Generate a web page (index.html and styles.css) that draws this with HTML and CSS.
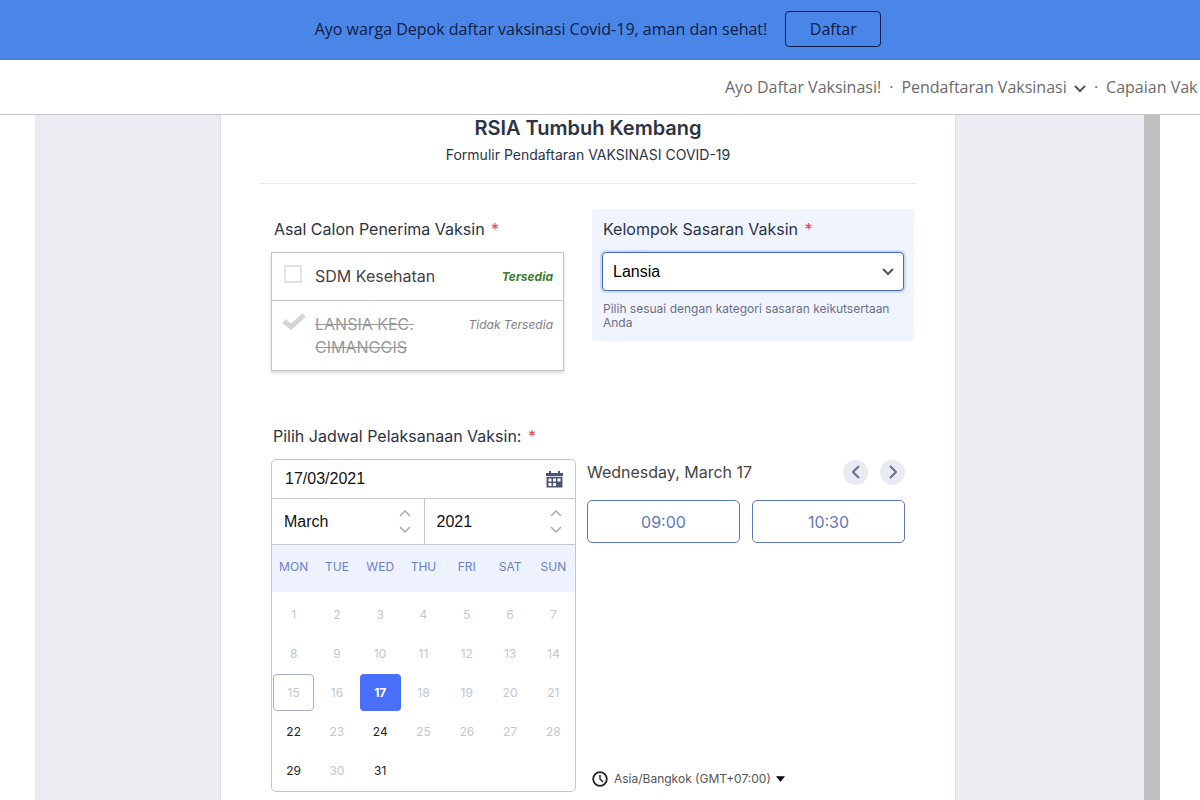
FILE: index.html
```html
<!DOCTYPE html>
<html lang="id">
<head>
<meta charset="utf-8">
<meta name="viewport" content="width=device-width, initial-scale=1">
<title>RSIA Tumbuh Kembang</title>
<link rel="stylesheet" href="styles.css">
</head>
<body>
<div class="banner">
  <span>Ayo warga Depok daftar vaksinasi Covid-19, aman dan sehat!</span>
  <a class="banner-button" href="#form">Daftar</a>
</div>
<header class="site-header">
  <nav class="nav">
    <a href="#">Ayo Daftar Vaksinasi!</a>
    <span class="dot">·</span>
    <a href="#">Pendaftaran Vaksinasi
      <svg class="nav-chevron" width="12" height="8" viewBox="0 0 12 8" aria-hidden="true"><path d="M1 1l5 5 5-5" fill="none" stroke="#555" stroke-width="2"/></svg></a>
    <span class="dot">·</span>
    <a href="#">Capaian Vak</a>
  </nav>
</header>
<main class="frame">
  <form class="form" id="form">
    <div class="form-head">
      <h1>RSIA Tumbuh Kembang</h1>
      <p>Formulir Pendaftaran VAKSINASI COVID-19</p>
    </div>
    <div class="row">
      <fieldset class="origin">
        <legend class="label">Asal Calon Penerima Vaksin <span class="star">*</span></legend>
        <div class="options">
          <label class="option">
            <input type="checkbox" class="check">
            <span class="option-name">SDM Kesehatan</span>
            <span class="status open">Tersedia</span>
          </label>
          <label class="option gone">
            <input type="checkbox" class="check-hidden" checked disabled>
            <svg class="tick" width="24" height="18" viewBox="0 0 24 18" aria-hidden="true"><path d="M2 8l7 6L22 2" fill="none" stroke="#d4d4d4" stroke-width="5"/></svg>
            <span class="option-name">LANSIA KEC. CIMANGGIS</span>
            <span class="status">Tidak Tersedia</span>
          </label>
        </div>
      </fieldset>
      <div class="group">
        <label class="label" for="target">Kelompok Sasaran Vaksin <span class="star">*</span></label>
        <select id="target" class="select"><option>Lansia</option></select>
        <p class="hint">Pilih sesuai dengan kategori sasaran keikutsertaan Anda</p>
      </div>
    </div>
    <label class="label schedule-label" for="date">Pilih Jadwal Pelaksanaan Vaksin: <span class="star">*</span></label>
    <div class="schedule">
      <div class="calendar">
        <div class="date-row">
          <input id="date" class="date" type="text" value="17/03/2021">
          <svg width="17" height="17" viewBox="0 0 17 17" aria-hidden="true"><path fill="#4d5670" fill-rule="evenodd" d="M0 2h3V0h2v2h7V0h2v2h3v3H0zM0.500 5.800h16V16.500h-16zM2.500 7.500v3h3v-3zM7 7.500v3h3v-3zM11.500 7.500v3h3v-3zM2.500 12v3h3v-3zM7 12v3h3v-3z"/></svg>
        </div>
        <div class="period">
          <div class="spin">
            <input type="text" value="March" aria-label="Month">
            <span class="steps">
              <button type="button" aria-label="Next month"><svg width="12" height="7" viewBox="0 0 12 7"><path d="M1 6l5-5 5 5"/></svg></button>
              <button type="button" aria-label="Previous month"><svg width="12" height="7" viewBox="0 0 12 7"><path d="M1 1l5 5 5-5"/></svg></button>
            </span>
          </div>
          <div class="spin">
            <input type="text" value="2021" aria-label="Year">
            <span class="steps">
              <button type="button" aria-label="Next year"><svg width="12" height="7" viewBox="0 0 12 7"><path d="M1 6l5-5 5 5"/></svg></button>
              <button type="button" aria-label="Previous year"><svg width="12" height="7" viewBox="0 0 12 7"><path d="M1 1l5 5 5-5"/></svg></button>
            </span>
          </div>
        </div>
        <table class="days">
          <thead><tr><th>MON</th><th>TUE</th><th>WED</th><th>THU</th><th>FRI</th><th>SAT</th><th>SUN</th></tr></thead>
          <tbody>
            <tr><td>1</td><td>2</td><td>3</td><td>4</td><td>5</td><td>6</td><td>7</td></tr>
            <tr><td>8</td><td>9</td><td>10</td><td>11</td><td>12</td><td>13</td><td>14</td></tr>
            <tr><td><span class="day today">15</span></td><td>16</td><td><button type="button" class="day picked">17</button></td><td>18</td><td>19</td><td>20</td><td>21</td></tr>
            <tr><td><button type="button" class="day">22</button></td><td>23</td><td><button type="button" class="day">24</button></td><td>25</td><td>26</td><td>27</td><td>28</td></tr>
            <tr><td><button type="button" class="day">29</button></td><td>30</td><td><button type="button" class="day">31</button></td><td></td><td></td><td></td><td></td></tr>
          </tbody>
        </table>
      </div>
      <div class="slots">
        <div class="slots-head">
          <span class="slots-date">Wednesday, March 17</span>
          <button type="button" class="round" aria-label="Previous day"><svg width="8" height="14" viewBox="0 0 8 14"><path d="M7 1L1 7l6 6"/></svg></button>
          <button type="button" class="round" aria-label="Next day"><svg width="8" height="14" viewBox="0 0 8 14"><path d="M1 1l6 6-6 6"/></svg></button>
        </div>
        <div class="times">
          <button type="button" class="time">09:00</button>
          <button type="button" class="time">10:30</button>
        </div>
        <button type="button" class="zone">
          <svg width="16" height="16" viewBox="0 0 16 16" aria-hidden="true"><circle cx="8" cy="8" r="6.800" fill="none" stroke="#222" stroke-width="1.800"/><path d="M8 4v4l3 3" fill="none" stroke="#222" stroke-width="1.400"/></svg>
          <span>Asia/Bangkok (GMT+07:00)</span>
          <svg class="caret" width="9" height="6" viewBox="0 0 10 6" aria-hidden="true"><path d="M0 0h10L5 6z"/></svg>
        </button>
      </div>
    </div>
  </form>
</main>
</body>
</html>
```

FILE: styles.css
```css
* { box-sizing: border-box; }

body {
  margin: 0;
  min-height: 100vh;
  display: flex;
  flex-direction: column;
  background: #fff;
  color: #2c3345;
  font-family: Inter, "Liberation Sans", sans-serif;
  overflow-x: hidden;
}

button, input, select { font-family: inherit; }
button { padding: 0; border: 0; background: none; color: inherit; }
p, h1 { margin: 0; }

.banner {
  display: flex;
  align-items: center;
  justify-content: center;
  gap: 18px;
  height: 60px;
  padding: 0 4px 2px 0;
  border-bottom: 1px solid #4a7fd0;
  background: #4a86e8;
  color: #0d1c45;
  font: 16px/20px "Open Sans", sans-serif;
}

.banner-button {
  width: 96px;
  padding: 7px 0;
  border: 1px solid #0d1c45;
  border-radius: 4px;
  color: inherit;
  text-align: center;
  text-decoration: none;
}

.site-header {
  display: flex;
  justify-content: flex-end;
  height: 55px;
  border-bottom: 1px solid #c4c4c4;
}

.nav {
  display: flex;
  align-items: center;
  gap: 8px;
  width: 475px;
  white-space: nowrap;
  color: #6b6b6b;
  font: 16px/24px "Open Sans", sans-serif;
}

.nav a { color: inherit; text-decoration: none; }
.nav-chevron { margin-left: 3px; }

.frame {
  flex: 1;
  display: grid;
  grid-template-columns: 185fr 736fr 188fr;
  margin: 0 40px 0 35px;
  border-right: 16px solid #c0c0c0;
  background: #ebecf2;
}

.form {
  grid-column: 2;
  padding: 0 38px 7px;
  border: solid #dddfe8;
  border-width: 0 1px;
  background: #fff;
}

.form-head {
  padding-bottom: 19px;
  border-bottom: 1px solid #e8e9ee;
  text-align: center;
}

.form-head h1 { font-size: 20px; font-weight: 600; line-height: 26px; }
.form-head p { padding-top: 5px; font-size: 14px; line-height: 18px; }

.row {
  display: grid;
  grid-template-columns: 293fr 322fr;
  align-items: start;
  gap: 28px;
  margin: 25px 3px 0 12px;
}

.label { display: block; font-size: 16px; line-height: 20px; }
.star { margin-left: 2px; color: #e0454b; }

.origin { min-width: 0; margin: 0; padding: 10px 0 0; border: 0; }
.origin .label { float: left; width: 100%; padding: 0 3px 13px; }

.options {
  clear: both;
  border: 1px solid #c4c4c4;
  box-shadow: 0 2px 3px #d8d8d8;
}

.option {
  display: grid;
  grid-template-columns: 24px 1fr auto;
  align-items: start;
  column-gap: 9px;
  padding: 12px 10px;
  color: #444;
  font-size: 16px;
  line-height: 23px;
}

.option.gone { padding: 12px 10px 11px; border-top: 1px solid #c4c4c4; color: #999; }
.gone .option-name { text-decoration: line-through; }

.check {
  appearance: none;
  width: 18px;
  height: 18px;
  margin: 0 2px;
  border: 2px solid #e3e3e3;
  background: #fff;
}

.check-hidden { position: absolute; opacity: 0; }
.status { color: #808080; font-size: 12px; font-style: italic; }
.status.open { color: #3c8030; font-weight: 700; }

.group { padding: 10px; border-radius: 3px; background: #f0f4fe; }
.group .label { padding: 0 1px; }

.select {
  appearance: none;
  display: block;
  width: 100%;
  height: 39px;
  margin-top: 13px;
  padding: 0 10px;
  border: 1px solid #4568b0;
  border-radius: 4px;
  box-shadow: 0 0 0 2px #cbdafb;
  background: #fff url("data:image/svg+xml,%3Csvg xmlns='http://www.w3.org/2000/svg' width='12' height='8'%3E%3Cpath d='M1 1l5 5 5-5' fill='none' stroke='%23555' stroke-width='2'/%3E%3C/svg%3E") no-repeat right 9px center;
  color: #000;
  font: 16px "Liberation Sans", sans-serif;
}

.hint { padding: 11px 1px 1px; color: #6b7185; font-size: 12px; line-height: 14px; }

.schedule-label { margin: 55px 0 0 14px; }

.schedule {
  display: grid;
  grid-template-columns: 305fr 318fr;
  gap: 11px;
  margin: 13px 12px 0;
}

.calendar { border: 1px solid #c3c6cf; border-radius: 5px; overflow: hidden; }

.date-row {
  display: flex;
  align-items: center;
  height: 39px;
  padding: 0 12px 0 13px;
  border-bottom: 1px solid #c3c6cf;
}

.date, .spin input {
  flex: 1;
  min-width: 0;
  padding: 0;
  border: 0;
  background: none;
  color: #111;
  font: 16px "Liberation Sans", sans-serif;
}

.period {
  display: grid;
  grid-template-columns: repeat(2, minmax(0, 1fr));
  border-bottom: 1px solid #c3c6cf;
}

.spin { display: flex; align-items: center; height: 45px; padding: 0 13px 0 12px; }
.spin + .spin { border-left: 1px solid #c3c6cf; }
.steps { display: grid; gap: 9px; }
.steps button { display: flex; }
.steps path { fill: none; stroke: #aaa; stroke-width: 1.500; }

.days { width: 100%; border-collapse: collapse; table-layout: fixed; font-size: 12px; }
.days th { height: 47px; padding: 0 0 5px; background: #edf2fe; color: #6c80c6; font-weight: 400; }
.days td { height: 39px; padding: 0; color: #c2c6d0; text-align: center; }
.days tbody::before { content: ""; display: table-row; height: 3px; }
.days tbody::after { content: ""; display: table-row; height: 1px; }

.day {
  display: block;
  width: 41px;
  height: 37px;
  margin: 0 auto;
  border-radius: 4px;
  color: #222;
  font-size: 12px;
  line-height: 35px;
}

.today { border: 1px solid #a3afcb; color: #c2c6d0; }
.picked { background: #4a6ffa; color: #fff; font-weight: 700; }

.slots { display: flex; flex-direction: column; }
.slots-head { display: flex; align-items: center; gap: 12px; height: 26px; }
.slots-date { flex: 1; color: #444; font-size: 16px; line-height: 20px; }

.round {
  display: grid;
  place-items: center;
  width: 25px;
  height: 25px;
  border-radius: 50%;
  background: #e9eaf3;
}

.round path { fill: none; stroke: #69718d; stroke-width: 2; }

.times { display: grid; grid-template-columns: 1fr 1fr; gap: 12px; margin-top: 15px; }

.time {
  height: 43px;
  border: 1px solid #5c76b8;
  border-radius: 5px;
  color: #6478b8;
  font-size: 16px;
}

.zone {
  display: flex;
  align-items: center;
  gap: 5px;
  margin: auto 0 4px 5px;
  color: #555;
  font-size: 12px;
  line-height: 18px;
}

.zone span { padding-left: 1px; }
```
